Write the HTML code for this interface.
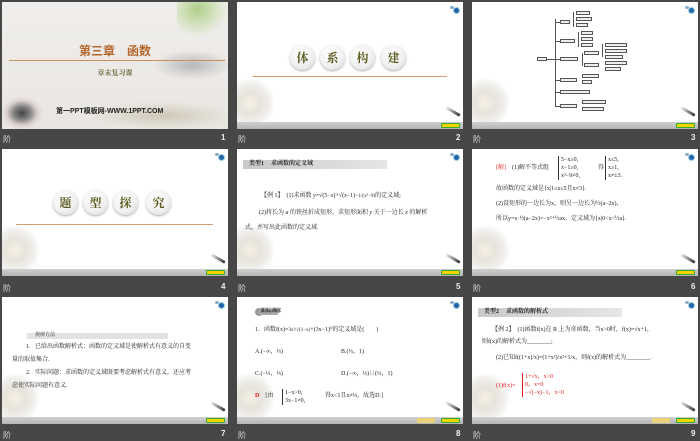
<!DOCTYPE html>
<html><head><meta charset="utf-8"><style>
*{margin:0;padding:0;box-sizing:border-box}
body{width:700px;height:438px;background:#474747;position:relative;overflow:hidden;font-family:"Liberation Serif","Noto Serif CJK SC","Noto Sans CJK SC",serif;color:#222}
.s{position:absolute;width:226px;height:127px;background:#fff;overflow:hidden}
.bar{position:absolute;left:0;top:120px;width:226px;height:7px;background:linear-gradient(#d0d0d0,#b4b4b4)}
.btn{position:absolute;top:121px;height:5px;width:19px;left:204px;background:#f2d400;border:1px solid #3a3;border-radius:1px}
.btn2{position:absolute;top:121px;height:5px;width:18px;left:180px;background:#e9d27a}
.ico{position:absolute;left:213px;top:4px;width:8px;height:6px}
.ico:before{content:"";position:absolute;left:3px;top:1px;width:5px;height:5px;border-radius:50%;background:#2266aa;border:1px solid #9cd}
.ico:after{content:"";position:absolute;left:0;top:0;width:4px;height:3px;border-radius:50%;background:#8ac}
.pen{position:absolute;left:208px;top:108px;width:16px;height:3px;background:linear-gradient(90deg,#eee,#333);transform:rotate(30deg);border-radius:2px}
.fl{position:absolute;left:-12px;top:78px;width:50px;height:50px;border-radius:50%;background:radial-gradient(circle at 50% 50%,#f6f0e4 0,#e8e4dc 30%,rgba(230,228,224,.6) 55%,rgba(255,255,255,0) 72%)}
.lab{position:absolute;font:8px "Liberation Sans","Noto Sans CJK SC",sans-serif;color:#ddd}
.num{position:absolute;font:bold 8px "Liberation Sans",sans-serif;color:#eee}
.t{position:absolute;white-space:nowrap;font-size:6px;line-height:7px}
.c{position:absolute;width:25px;height:25px;border-radius:50%;background:radial-gradient(circle at 40% 35%,#fff 0,#f1f1f1 55%,#d4d4d4 100%);box-shadow:0 1px 2px #aaa;font:bold 12px "Noto Serif CJK SC",serif;color:#5b5a1e;text-align:center;line-height:25px}
.hd{position:absolute;left:6px;top:11px;width:144px;height:9px;background:linear-gradient(90deg,#c9c9c9,#e6e6e6)}
.hd b{position:absolute;left:6px;top:0;font-size:6px;line-height:9px}
.hd i{position:absolute;left:28px;top:0;font-style:normal;font-weight:bold;font-size:6px;line-height:9px}
.bx{position:absolute;height:4px;border:1px solid #555;background:#eee}
.ln{position:absolute;background:#555}
.red{color:#e02020}
</style></head><body>

<!-- slide 1 -->
<div class="s" style="left:2px;top:2px;background:linear-gradient(#f0eeec,#e9e6e2)">
 <div style="position:absolute;left:150px;top:48px;width:80px;height:30px;background:radial-gradient(ellipse,#b8b8b8 0,rgba(200,200,200,.5) 45%,rgba(230,230,230,0) 70%)"></div>
 <div style="position:absolute;left:90px;top:100px;width:140px;height:27px;background:radial-gradient(ellipse,#cfc8b8 0,rgba(220,214,200,.4) 55%,rgba(230,230,230,0) 75%)"></div>
 <div style="position:absolute;left:0;top:95px;width:40px;height:32px;background:radial-gradient(ellipse,#444 0,rgba(90,90,90,.7) 30%,rgba(200,180,180,.4) 55%,rgba(230,230,230,0) 75%)"></div>
 <div style="position:absolute;left:175px;top:0;width:52px;height:35px;background:radial-gradient(ellipse at 40% 20%,rgba(120,180,60,.55) 0,rgba(150,200,90,.3) 40%,rgba(255,255,255,0) 70%)"></div>
 <div class="t" style="left:0;width:226px;text-align:center;top:42px;font:bold 12px/14px 'Noto Sans CJK SC',sans-serif;color:#b3652c">第三章　函数</div>
 <div style="position:absolute;left:7px;top:58px;width:216px;height:1px;background:#c8905e"></div>
 <div class="t" style="left:0;width:226px;text-align:center;top:67px;font:bold 7px/8px 'Noto Serif CJK SC',serif;color:#6c6a3a">章末复习课</div>
 <div class="t" style="left:54px;top:106px;font:bold 7px/8px 'Liberation Sans','Noto Sans CJK SC',sans-serif;color:#222">第一PPT模板网-WWW.1PPT.COM</div>
</div>
<div class="lab" style="left:3px;top:134px">阶</div><div class="num" style="left:221px;top:133px">1</div>

<!-- slide 2 -->
<div class="s" style="left:237px;top:2px">
 <div class="fl" style="top:76px"></div>
 <div class="c" style="left:53px;top:43px">体</div><div class="c" style="left:83px;top:43px">系</div><div class="c" style="left:113px;top:43px">构</div><div class="c" style="left:144px;top:43px">建</div>
 <div style="position:absolute;left:16px;top:74px;width:194px;height:1px;background:#d49a70"></div>
 <div class="ico"></div><div class="pen"></div><div class="bar"></div><div class="btn"></div>
</div>
<div class="lab" style="left:238px;top:134px">阶</div><div class="num" style="left:456px;top:133px">2</div>

<!-- slide 3 -->
<div class="s" style="left:472px;top:2px">
 <div class="fl" style="top:76px"></div>
 <div class="bx" style="left:65px;top:55px;width:10px"></div>
 <div class="ln" style="left:75px;top:57px;width:8px;height:1px"></div>
 <div class="ln" style="left:83px;top:17px;width:1px;height:87px"></div>
 <div class="bx" style="left:88px;top:18px;width:10px"></div><div class="ln" style="left:83px;top:20px;width:5px;height:1px"></div>
 <div class="ln" style="left:101px;top:10px;width:1px;height:15px"></div>
 <div class="bx" style="left:104px;top:9px;width:14px"></div><div class="bx" style="left:104px;top:15px;width:16px"></div><div class="bx" style="left:104px;top:21px;width:12px"></div>
 <div class="bx" style="left:88px;top:37px;width:15px"></div><div class="ln" style="left:83px;top:39px;width:5px;height:1px"></div>
 <div class="ln" style="left:106px;top:30px;width:1px;height:15px"></div>
 <div class="bx" style="left:109px;top:29px;width:12px"></div><div class="bx" style="left:109px;top:35px;width:12px"></div><div class="bx" style="left:109px;top:41px;width:12px"></div>
 <div class="bx" style="left:88px;top:55px;width:18px"></div><div class="ln" style="left:83px;top:57px;width:5px;height:1px"></div>
 <div class="ln" style="left:110px;top:51px;width:1px;height:13px"></div>
 <div class="bx" style="left:112px;top:49px;width:15px"></div><div class="bx" style="left:112px;top:61px;width:15px"></div>
 <div class="ln" style="left:130px;top:42px;width:1px;height:13px"></div>
 <div class="bx" style="left:133px;top:41px;width:22px"></div><div class="bx" style="left:133px;top:47px;width:22px"></div><div class="bx" style="left:133px;top:53px;width:18px"></div>
 <div class="bx" style="left:133px;top:59px;width:22px"></div><div class="bx" style="left:133px;top:65px;width:16px"></div>
 <div class="bx" style="left:88px;top:76px;width:17px"></div><div class="ln" style="left:83px;top:78px;width:5px;height:1px"></div>
 <div class="bx" style="left:110px;top:72px;width:17px"></div><div class="bx" style="left:110px;top:78px;width:10px"></div>
 <div class="bx" style="left:88px;top:88px;width:30px"></div><div class="ln" style="left:83px;top:90px;width:5px;height:1px"></div>
 <div class="bx" style="left:88px;top:102px;width:17px"></div><div class="ln" style="left:83px;top:104px;width:5px;height:1px"></div>
 <div class="bx" style="left:110px;top:98px;width:24px"></div><div class="bx" style="left:110px;top:105px;width:22px"></div>
 <div class="ico"></div><div class="pen"></div><div class="bar"></div><div class="btn"></div>
</div>
<div class="lab" style="left:473px;top:134px">阶</div><div class="num" style="left:691px;top:133px">3</div>

<!-- slide 4 -->
<div class="s" style="left:2px;top:149px">
 <div class="fl" style="top:76px"></div>
 <div class="c" style="left:51px;top:41px">题</div><div class="c" style="left:81px;top:41px">型</div><div class="c" style="left:111px;top:41px">探</div><div class="c" style="left:144px;top:41px">究</div>
 <div style="position:absolute;left:14px;top:75px;width:197px;height:1px;background:#d49a70"></div>
 <div class="ico"></div><div class="pen"></div><div class="bar"></div><div class="btn"></div>
</div>
<div class="lab" style="left:3px;top:283px">阶</div><div class="num" style="left:221px;top:282px">4</div>

<!-- slide 5 -->
<div class="s" style="left:237px;top:149px">
 <div class="fl" style="top:76px"></div>
 <div class="hd"><b>类型1</b><i>求函数的定义域</i></div>
 <div class="t" style="left:24px;top:44px">【例 1】　(1)求函数 <i>y</i>=√(5−<i>x</i>)+√(<i>x</i>−1)−<span style="font-size:5px">1/(x²−9)</span>的定义域;</div>
 <div class="t" style="left:22px;top:61px">(2)将长为 <i>a</i> 的铁丝折成矩形，求矩形面积 <i>y</i> 关于一边长 <i>x</i> 的解析</div>
 <div class="t" style="left:8px;top:76px">式，并写出此函数的定义域.</div>
 <div class="ico"></div><div class="pen"></div><div class="bar"></div><div class="btn"></div>
</div>
<div class="lab" style="left:238px;top:283px">阶</div><div class="num" style="left:456px;top:282px">5</div>

<!-- slide 6 -->
<div class="s" style="left:472px;top:149px">
 <div class="fl" style="top:76px"></div>
 <div class="t" style="left:24px;top:16px"><span class="red">[解]</span>　(1)解不等式组</div>
 <div class="t" style="left:86px;top:7px;border-left:1px solid #333;padding-left:2px;line-height:8px">5−x≥0,<br>x−1≥0,<br>x²−9≠0,</div>
 <div class="t" style="left:126px;top:16px">得</div>
 <div class="t" style="left:133px;top:7px;border-left:1px solid #333;padding-left:2px;line-height:8px">x≤5,<br>x≥1,<br>x≠±3.</div>
 <div class="t" style="left:24px;top:37px">故函数的定义域是{x|1≤x≤5且x≠3}.</div>
 <div class="t" style="left:24px;top:52px">(2)设矩形的一边长为x，则另一边长为½(a−2x)，</div>
 <div class="t" style="left:24px;top:67px">所以y=x·½(a−2x)=−x²+½ax，定义域为{x|0&lt;x&lt;½a}.</div>
 <div class="ico"></div><div class="pen"></div><div class="bar"></div><div class="btn"></div>
</div>
<div class="lab" style="left:473px;top:283px">阶</div><div class="num" style="left:691px;top:282px">6</div>

<!-- slide 7 -->
<div class="s" style="left:2px;top:297px">
 <div class="fl" style="top:76px"></div>
 <div style="position:absolute;left:25px;top:36px;width:141px;height:6px;background:#e2e2e2"></div>
 <div class="t" style="left:33px;top:35px;font-size:5px">规律方法</div>
 <div class="t" style="left:24px;top:47px">1．已给出函数解析式：函数的定义域是使解析式有意义的自变</div>
 <div class="t" style="left:10px;top:60px">量的取值集合.</div>
 <div class="t" style="left:24px;top:73px">2．实际问题：求函数的定义域既要考虑解析式有意义，还应考</div>
 <div class="t" style="left:10px;top:86px">虑使实际问题有意义.</div>
 <div class="ico"></div><div class="pen"></div><div class="bar"></div><div class="btn"></div>
</div>
<div class="lab" style="left:3px;top:430px">阶</div><div class="num" style="left:221px;top:429px">7</div>

<!-- slide 8 -->
<div class="s" style="left:237px;top:297px">
 <div class="fl" style="top:76px"></div>
 <div style="position:absolute;left:18px;top:11px;width:8px;height:8px;border-radius:50%;background:#999"></div>
 <div style="position:absolute;left:22px;top:12px;width:20px;height:6px;background:#aaa;border-radius:3px"></div>
 <div class="t" style="left:24px;top:11px;font-size:5px;font-weight:bold">跟踪训练</div>
 <div class="t" style="left:18px;top:30px">1．函数f(x)=<span style="font-size:5px">3x²/√(1−x)</span>+(3x−1)⁰的定义域是(　　)</div>
 <div class="t" style="left:18px;top:52px">A.(−∞，⅓)</div><div class="t" style="left:104px;top:52px">B.(⅓，1)</div>
 <div class="t" style="left:18px;top:74px">C.(−⅓，⅓)</div><div class="t" style="left:104px;top:74px">D.(−∞，⅓)∪(⅓，1)</div>
 <div class="t" style="left:18px;top:96px"><b class="red">D</b>　[由</div>
 <div class="t" style="left:45px;top:92px;border-left:1px solid #333;padding-left:2px;line-height:8px">1−x&gt;0,<br>3x−1≠0,</div>
 <div class="t" style="left:88px;top:96px">得x&lt;1且x≠⅓，故选D.]</div>
 <div class="ico"></div><div class="pen"></div><div class="bar"></div><div class="btn2"></div><div class="btn"></div>
</div>
<div class="lab" style="left:238px;top:430px">阶</div><div class="num" style="left:456px;top:429px">8</div>

<!-- slide 9 -->
<div class="s" style="left:472px;top:297px">
 <div class="fl" style="top:76px"></div>
 <div class="hd"><b>类型2</b><i>求函数的解析式</i></div>
 <div class="t" style="left:20px;top:30px">【例 2】　(1)函数f(x)在 R 上为奇函数，当x&gt;0时，f(x)=√x+1，</div>
 <div class="t" style="left:10px;top:42px">则f(x)的解析式为________;</div>
 <div class="t" style="left:24px;top:58px">(2)已知f((1+x)/x)=(1+x²)/x²+1/x，则f(x)的解析式为________.</div>
 <div class="t red" style="left:24px;top:86px">(1)f(x)=</div>
 <div class="t red" style="left:50px;top:76px;border-left:1px solid #e02020;padding-left:2px;line-height:8px">1+√x，x&gt;0<br>0，x=0<br>−√(−x)−1，x&lt;0</div>
 <div class="ico"></div><div class="pen"></div><div class="bar"></div><div class="btn2"></div><div class="btn"></div>
</div>
<div class="lab" style="left:473px;top:430px">阶</div><div class="num" style="left:691px;top:429px">9</div>

</body></html>
